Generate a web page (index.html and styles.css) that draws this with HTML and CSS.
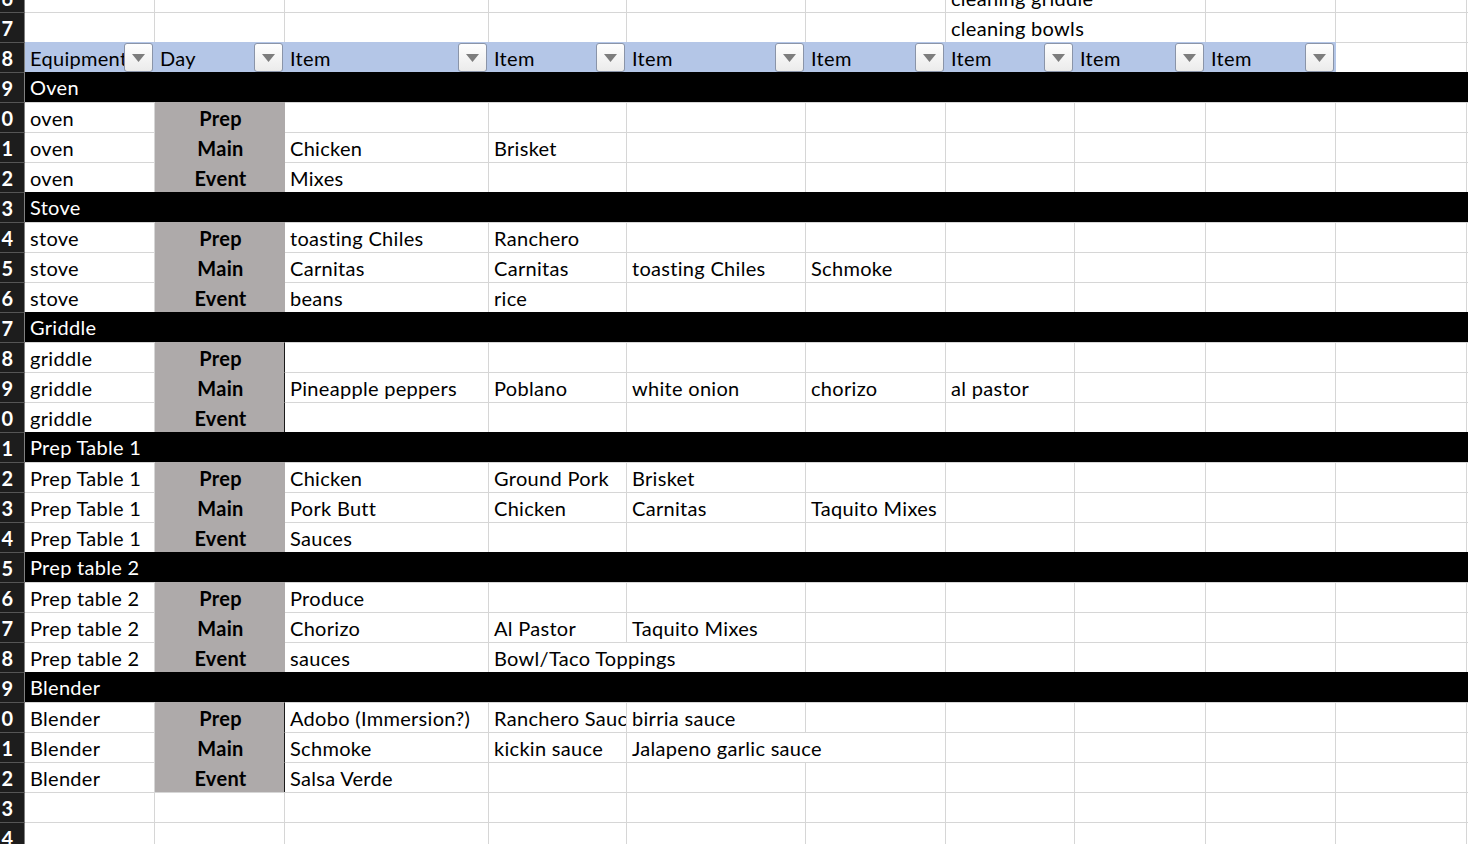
FILE: index.html
```html
<!DOCTYPE html>
<html lang="en">
<head>
<meta charset="utf-8">
<title>Equipment schedule</title>
<link rel="stylesheet" href="styles.css">
</head>
<body>
<div class="sheet">
  <div class="row"><div class="rh"><span>16</span></div><div class="c"></div><div class="c"></div><div class="c"></div><div class="c"></div><div class="c"></div><div class="c"></div><div class="c s2">cleaning griddle</div><div class="c"></div><div class="c"></div><div class="c last"></div></div>
  <div class="row"><div class="rh"><span>17</span></div><div class="c"></div><div class="c"></div><div class="c"></div><div class="c"></div><div class="c"></div><div class="c"></div><div class="c s2">cleaning bowls</div><div class="c"></div><div class="c"></div><div class="c last"></div></div>
  <div class="row"><div class="rh"><span>18</span></div>
    <div class="c hd">Equipment<span class="dd"><svg width="13" height="8" viewBox="0 0 13 8"><polygon points="0,0 13,0 6.5,8" fill="#7d7d7d"/></svg></span></div>
    <div class="c hd">Day<span class="dd"><svg width="13" height="8" viewBox="0 0 13 8"><polygon points="0,0 13,0 6.5,8" fill="#7d7d7d"/></svg></span></div>
    <div class="c hd">Item<span class="dd"><svg width="13" height="8" viewBox="0 0 13 8"><polygon points="0,0 13,0 6.5,8" fill="#7d7d7d"/></svg></span></div>
    <div class="c hd">Item<span class="dd"><svg width="13" height="8" viewBox="0 0 13 8"><polygon points="0,0 13,0 6.5,8" fill="#7d7d7d"/></svg></span></div>
    <div class="c hd">Item<span class="dd"><svg width="13" height="8" viewBox="0 0 13 8"><polygon points="0,0 13,0 6.5,8" fill="#7d7d7d"/></svg></span></div>
    <div class="c hd">Item<span class="dd"><svg width="13" height="8" viewBox="0 0 13 8"><polygon points="0,0 13,0 6.5,8" fill="#7d7d7d"/></svg></span></div>
    <div class="c hd">Item<span class="dd"><svg width="13" height="8" viewBox="0 0 13 8"><polygon points="0,0 13,0 6.5,8" fill="#7d7d7d"/></svg></span></div>
    <div class="c hd">Item<span class="dd"><svg width="13" height="8" viewBox="0 0 13 8"><polygon points="0,0 13,0 6.5,8" fill="#7d7d7d"/></svg></span></div>
    <div class="c hd">Item<span class="dd"><svg width="13" height="8" viewBox="0 0 13 8"><polygon points="0,0 13,0 6.5,8" fill="#7d7d7d"/></svg></span></div>
    <div class="c"></div><div class="c last"></div>
  </div>
  <div class="row"><div class="rh"><span>19</span></div><div class="band">Oven</div></div>
  <div class="row"><div class="rh"><span>20</span></div><div class="c">oven</div><div class="c day">Prep</div><div class="c"></div><div class="c"></div><div class="c"></div><div class="c"></div><div class="c"></div><div class="c"></div><div class="c"></div><div class="c"></div><div class="c last"></div></div>
  <div class="row"><div class="rh"><span>21</span></div><div class="c">oven</div><div class="c day">Main</div><div class="c">Chicken</div><div class="c">Brisket</div><div class="c"></div><div class="c"></div><div class="c"></div><div class="c"></div><div class="c"></div><div class="c"></div><div class="c last"></div></div>
  <div class="row"><div class="rh"><span>22</span></div><div class="c">oven</div><div class="c day">Event</div><div class="c">Mixes</div><div class="c"></div><div class="c"></div><div class="c"></div><div class="c"></div><div class="c"></div><div class="c"></div><div class="c"></div><div class="c last"></div></div>
  <div class="row"><div class="rh"><span>23</span></div><div class="band">Stove</div></div>
  <div class="row"><div class="rh"><span>24</span></div><div class="c">stove</div><div class="c day">Prep</div><div class="c">toasting Chiles</div><div class="c">Ranchero</div><div class="c"></div><div class="c"></div><div class="c"></div><div class="c"></div><div class="c"></div><div class="c"></div><div class="c last"></div></div>
  <div class="row"><div class="rh"><span>25</span></div><div class="c">stove</div><div class="c day">Main</div><div class="c">Carnitas</div><div class="c">Carnitas</div><div class="c">toasting Chiles</div><div class="c">Schmoke</div><div class="c"></div><div class="c"></div><div class="c"></div><div class="c"></div><div class="c last"></div></div>
  <div class="row"><div class="rh"><span>26</span></div><div class="c">stove</div><div class="c day">Event</div><div class="c">beans</div><div class="c">rice</div><div class="c"></div><div class="c"></div><div class="c"></div><div class="c"></div><div class="c"></div><div class="c"></div><div class="c last"></div></div>
  <div class="row"><div class="rh"><span>27</span></div><div class="band">Griddle</div></div>
  <div class="row"><div class="rh"><span>28</span></div><div class="c">griddle</div><div class="c day edge">Prep</div><div class="c"></div><div class="c"></div><div class="c"></div><div class="c"></div><div class="c"></div><div class="c"></div><div class="c"></div><div class="c"></div><div class="c last"></div></div>
  <div class="row"><div class="rh"><span>29</span></div><div class="c">griddle</div><div class="c day edge">Main</div><div class="c">Pineapple peppers</div><div class="c">Poblano</div><div class="c">white onion</div><div class="c">chorizo</div><div class="c">al pastor</div><div class="c"></div><div class="c"></div><div class="c"></div><div class="c last"></div></div>
  <div class="row"><div class="rh"><span>30</span></div><div class="c">griddle</div><div class="c day edge">Event</div><div class="c"></div><div class="c"></div><div class="c"></div><div class="c"></div><div class="c"></div><div class="c"></div><div class="c"></div><div class="c"></div><div class="c last"></div></div>
  <div class="row"><div class="rh"><span>31</span></div><div class="band">Prep Table 1</div></div>
  <div class="row"><div class="rh"><span>32</span></div><div class="c">Prep Table 1</div><div class="c day">Prep</div><div class="c">Chicken</div><div class="c">Ground Pork</div><div class="c">Brisket</div><div class="c"></div><div class="c"></div><div class="c"></div><div class="c"></div><div class="c"></div><div class="c last"></div></div>
  <div class="row"><div class="rh"><span>33</span></div><div class="c">Prep Table 1</div><div class="c day">Main</div><div class="c">Pork Butt</div><div class="c">Chicken</div><div class="c">Carnitas</div><div class="c">Taquito Mixes</div><div class="c"></div><div class="c"></div><div class="c"></div><div class="c"></div><div class="c last"></div></div>
  <div class="row"><div class="rh"><span>34</span></div><div class="c">Prep Table 1</div><div class="c day">Event</div><div class="c">Sauces</div><div class="c"></div><div class="c"></div><div class="c"></div><div class="c"></div><div class="c"></div><div class="c"></div><div class="c"></div><div class="c last"></div></div>
  <div class="row"><div class="rh"><span>35</span></div><div class="band">Prep table 2</div></div>
  <div class="row"><div class="rh"><span>36</span></div><div class="c">Prep table 2</div><div class="c day">Prep</div><div class="c">Produce</div><div class="c"></div><div class="c"></div><div class="c"></div><div class="c"></div><div class="c"></div><div class="c"></div><div class="c"></div><div class="c last"></div></div>
  <div class="row"><div class="rh"><span>37</span></div><div class="c">Prep table 2</div><div class="c day">Main</div><div class="c">Chorizo</div><div class="c">Al Pastor</div><div class="c">Taquito Mixes</div><div class="c"></div><div class="c"></div><div class="c"></div><div class="c"></div><div class="c"></div><div class="c last"></div></div>
  <div class="row"><div class="rh"><span>38</span></div><div class="c">Prep table 2</div><div class="c day">Event</div><div class="c">sauces</div><div class="c s2">Bowl/Taco Toppings</div><div class="c"></div><div class="c"></div><div class="c"></div><div class="c"></div><div class="c"></div><div class="c last"></div></div>
  <div class="row"><div class="rh"><span>39</span></div><div class="band">Blender</div></div>
  <div class="row"><div class="rh"><span>40</span></div><div class="c">Blender</div><div class="c day edge">Prep</div><div class="c">Adobo (Immersion?)</div><div class="c">Ranchero Sauce</div><div class="c">birria sauce</div><div class="c"></div><div class="c"></div><div class="c"></div><div class="c"></div><div class="c"></div><div class="c last"></div></div>
  <div class="row"><div class="rh"><span>41</span></div><div class="c">Blender</div><div class="c day edge">Main</div><div class="c">Schmoke</div><div class="c">kickin sauce</div><div class="c s2">Jalapeno garlic sauce</div><div class="c"></div><div class="c"></div><div class="c"></div><div class="c"></div><div class="c last"></div></div>
  <div class="row"><div class="rh"><span>42</span></div><div class="c">Blender</div><div class="c day edge">Event</div><div class="c">Salsa Verde</div><div class="c"></div><div class="c"></div><div class="c"></div><div class="c"></div><div class="c"></div><div class="c"></div><div class="c"></div><div class="c last"></div></div>
  <div class="row"><div class="rh"><span>43</span></div><div class="c"></div><div class="c"></div><div class="c"></div><div class="c"></div><div class="c"></div><div class="c"></div><div class="c"></div><div class="c"></div><div class="c"></div><div class="c"></div><div class="c last"></div></div>
  <div class="row"><div class="rh"><span>44</span></div><div class="c"></div><div class="c"></div><div class="c"></div><div class="c"></div><div class="c"></div><div class="c"></div><div class="c"></div><div class="c"></div><div class="c"></div><div class="c"></div><div class="c last"></div></div>
</div>
</body>
</html>
```
FILE: styles.css
```css
* { box-sizing: border-box; }
html, body {
  margin: 0;
  padding: 0;
  background: #ffffff;
  overflow: hidden;
  height: 100%;
}
body {
  font-family: "Lato", "Liberation Sans", sans-serif;
  font-size: 20px;
  letter-spacing: 0.3px;
  color: #000;
}
.sheet {
  margin-top: -18px;
}
.row {
  display: grid;
  grid-template-columns: 25px 130px 130px 204px 138px 179px 140px 129px 131px 130px 131px 1fr;
  height: 30px;
}
.rh {
  background: #1d1d1d;
  color: #ffffff;
  border-top: 1px solid #555555;
  border-right: 1px solid #808080;
  display: flex;
  justify-content: flex-end;
  padding-right: 9px;
  padding-top: 2px;
  overflow: hidden;
  font-weight: bold;
  letter-spacing: 2px;
  line-height: 27px;
  white-space: nowrap;
}
.c {
  border-top: 1px solid #d6d6d6;
  border-right: 1px solid #d6d6d6;
  padding: 2px 0 0 5px;
  line-height: 27px;
  white-space: nowrap;
  overflow: hidden;
  min-width: 0;
}
.c.last { border-right: none; }
.c.s2 { grid-column: span 2; }
.hd {
  background: #b4c6e7;
  border-top-color: #b4c6e7;
  border-right-color: #b4c6e7;
  position: relative;
}
.dd {
  position: absolute;
  top: 0;
  right: 1px;
  width: 29px;
  height: 29px;
  border: 1px solid #8a94a8;
  border-radius: 3px;
  background: linear-gradient(#fefefe, #ebebeb);
  display: flex;
  align-items: center;
  justify-content: center;
}
.dd svg { display: block; }
.day {
  background: #aeaaaa;
  border-top-color: #aeaaaa;
  border-right-color: #aeaaaa;
  font-weight: bold;
  text-align: center;
  padding-left: 2px;
}
.day.edge {
  border-right-color: #1a1a1a;
}
.band {
  grid-column: 2 / -1;
  background: #000000;
  color: #ffffff;
  padding: 2px 0 0 5px;
  line-height: 27px;
  white-space: nowrap;
}
```
